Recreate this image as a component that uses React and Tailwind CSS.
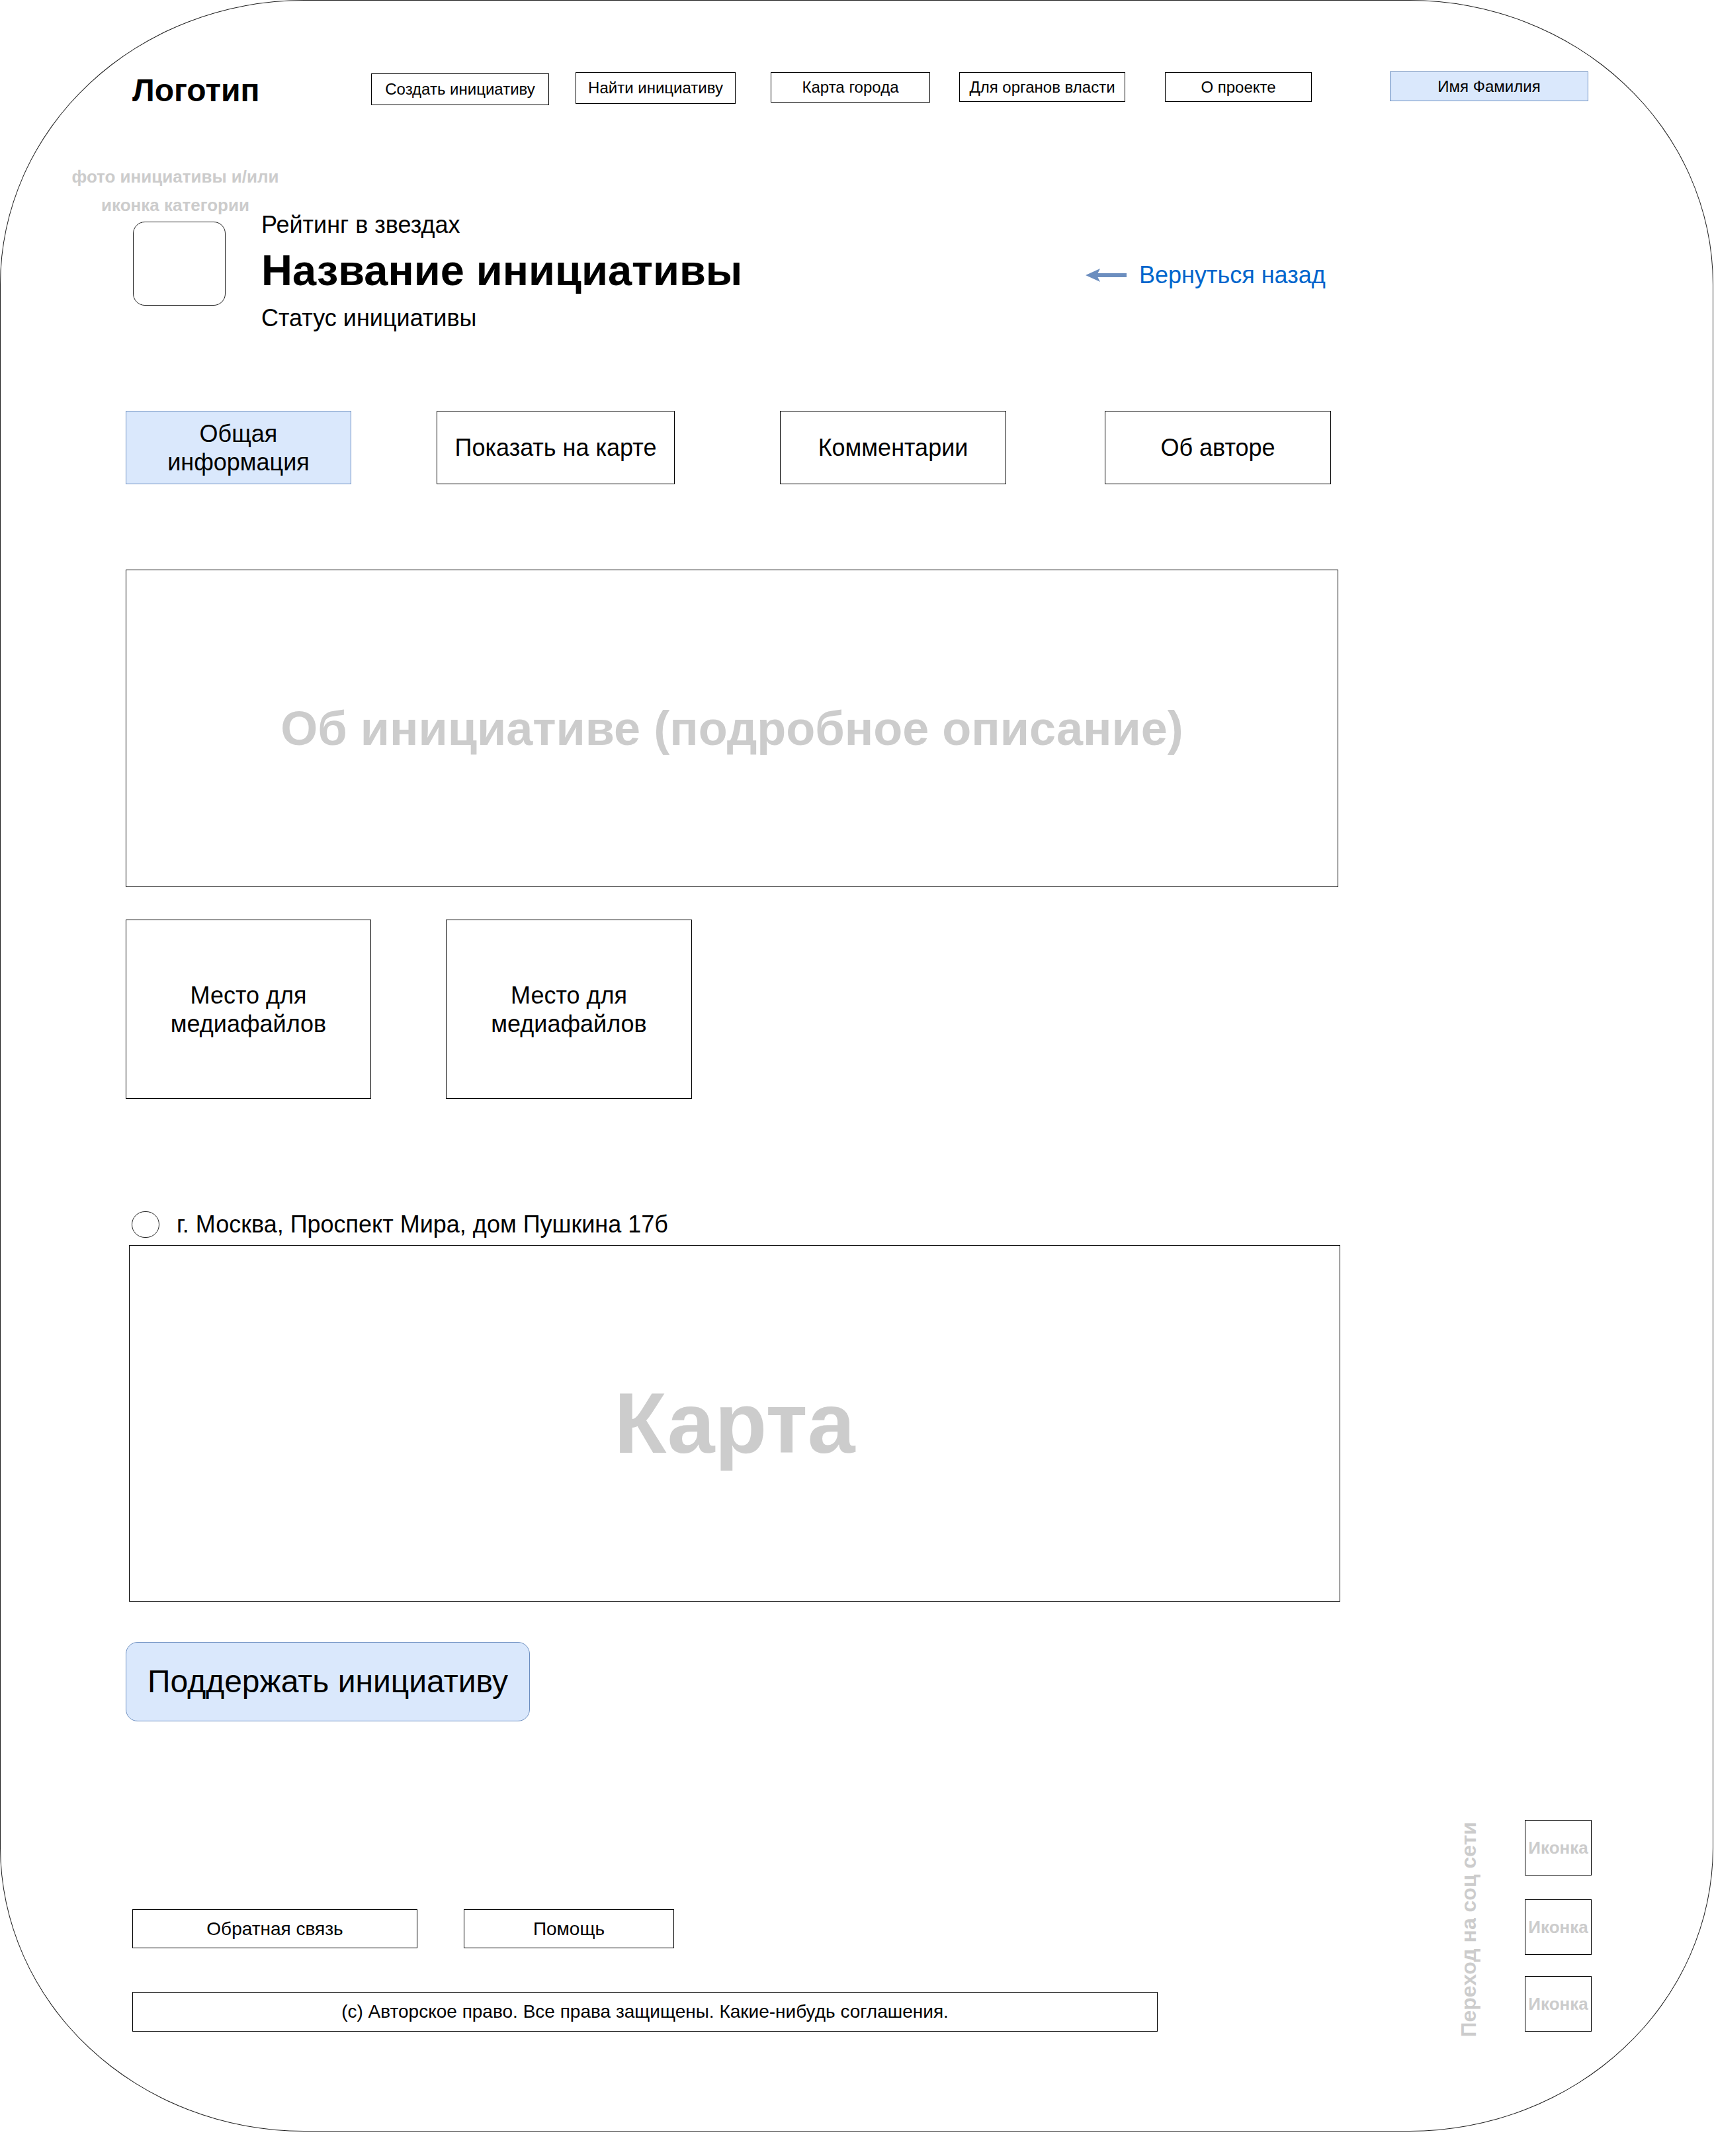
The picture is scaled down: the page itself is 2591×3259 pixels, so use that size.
const NAV = [
  { label: 'Создать инициативу', cls: 'mt-[3px] w-[269px] h-[48px]' },
  { label: 'Найти инициативу', cls: 'ml-[40px] mt-[1px] w-[242px] h-[48px]' },
  { label: 'Карта города', cls: 'ml-[53px] mt-[1px] w-[241px] h-[46px]' },
  { label: 'Для органов власти', cls: 'ml-[44px] mt-[1px] w-[251px] h-[45px]' },
  { label: 'О проекте', cls: 'ml-[60px] mt-[1px] w-[222px] h-[45px]' },
]

const TABS = [
  { label: 'Общая информация', cls: 'w-[341px] bg-[#dae8fc] border-[#6c8ebf] px-[40px]' },
  { label: 'Показать на карте', cls: 'ml-[129px] w-[360px] border-black' },
  { label: 'Комментарии', cls: 'ml-[159px] w-[342px] border-black' },
  { label: 'Об авторе', cls: 'ml-[149px] w-[342px] border-black' },
]

function BackArrow() {
  return (
    <svg width="62" height="20" viewBox="0 0 62 20">
      <rect x="17" y="7" width="45" height="6" fill="#6c8ebf" />
      <polygon points="0,10 22,0 17,10 22,20" fill="#6c8ebf" />
    </svg>
  )
}

export default function App() {
  return (
    <div className="w-[2591px] h-[3259px] bg-white text-black font-['Liberation_Sans',Arial,sans-serif]">
      <div className="w-[2590px] h-[3222px] border border-[#222] rounded-[460px/430px] pl-[189px] pt-[107px]">
        {/* header */}
        <div className="flex items-start">
          <div className="ml-[10px] mt-[5px] w-[361px] text-[48px] font-bold leading-none">Логотип</div>
          {NAV.map(n => (
            <div key={n.label} className={`${n.cls} border border-black flex items-center justify-center text-[24px] leading-none`}>
              {n.label}
            </div>
          ))}
          <div className="ml-[118px] w-[300px] h-[45px] border border-[#6c8ebf] bg-[#dae8fc] flex items-center justify-center text-[24px] leading-none">
            Имя Фамилия
          </div>
        </div>

        {/* initiative title */}
        <div className="mt-[85px] flex items-start">
          <div className="w-[205px] shrink-0">
            <div className="-ml-[105px] w-[360px] text-center text-[26px] font-bold leading-[43px] text-[#cccccc]">
              фото инициативы и/или<br />иконка категории
            </div>
            <div className="mt-[3px] ml-[11px] w-[140px] h-[127px] rounded-[18px] border border-[#222]" />
          </div>
          <div className="mt-[76px] flex items-start">
            <div className="w-[1246px] flex flex-col">
              <div className="text-[36px] leading-none">Рейтинг в звездах</div>
              <div className="mt-[18px] text-[65px] font-bold leading-none">Название инициативы</div>
              <div className="mt-[22px] text-[36px] leading-none">Статус инициативы</div>
            </div>
            <div className="mt-[76px] flex items-center gap-[19px] whitespace-nowrap">
              <BackArrow />
              <span className="text-[36px] leading-none text-[#0066cc]">Вернуться назад</span>
            </div>
          </div>
        </div>

        {/* tabs */}
        <div className="mt-[122px] flex h-[111px]">
          {TABS.map(t => (
            <div key={t.label} className={`${t.cls} border flex items-center justify-center text-center text-[36px] leading-[43px]`}>
              {t.label}
            </div>
          ))}
        </div>

        {/* description */}
        <div className="mt-[129px] w-[1833px] h-[480px] border border-black flex items-center justify-center">
          <span className="text-[72px] font-bold leading-none text-[#cccccc]">Об инициативе (подробное описание)</span>
        </div>

        {/* media */}
        <div className="mt-[49px] flex h-[271px]">
          <div className="w-[371px] border border-black flex items-center justify-center text-center text-[36px] leading-[43px]">
            Место для<br />медиафайлов
          </div>
          <div className="ml-[113px] w-[372px] border border-black flex items-center justify-center text-center text-[36px] leading-[43px]">
            Место для<br />медиафайлов
          </div>
        </div>

        {/* address + map */}
        <div className="mt-[170px] flex items-center h-[40px]">
          <div className="ml-[9px] w-[42px] h-[40px] rounded-full border border-[#222]" />
          <span className="ml-[26px] text-[36px] leading-none">г. Москва, Проспект Мира, дом Пушкина 17б</span>
        </div>
        <div className="mt-[11px] ml-[5px] w-[1831px] h-[539px] border border-black flex items-center justify-center">
          <span className="text-[129px] font-bold leading-none text-[#cccccc]">Карта</span>
        </div>

        <button className="mt-[61px] w-[611px] h-[120px] rounded-[18px] border border-[#6c8ebf] bg-[#dae8fc] flex items-center justify-center text-[48px] leading-none">
          Поддержать инициативу
        </button>

        {/* footer */}
        <div className="mt-[149px] flex items-start">
          <div className="ml-[10px] w-[1550px] pt-[135px]">
            <div className="flex">
              <div className="w-[431px] h-[59px] border border-black flex items-center justify-center text-[28px] leading-none">Обратная связь</div>
              <div className="ml-[70px] w-[318px] h-[59px] border border-black flex items-center justify-center text-[28px] leading-none">Помощь</div>
            </div>
            <div className="mt-[66px] w-[1550px] h-[60px] border border-black flex items-center justify-center text-[28px] leading-none">
              (с) Авторское право. Все права защищены. Какие-нибудь соглашения.
            </div>
          </div>
          <div className="ml-[454px] mt-[3px] w-[32px] [writing-mode:vertical-rl] rotate-180 whitespace-nowrap text-[32px] font-bold leading-none text-[#cccccc]">
            Переход на соц сети
          </div>
          <div className="ml-[69px] flex flex-col">
            {['mt-0', 'mt-[36px]', 'mt-[32px]'].map((m, i) => (
              <div key={i} className={`${m} w-[101px] h-[84px] border border-black flex items-center justify-center text-[26px] font-bold leading-none text-[#cccccc]`}>
                Иконка
              </div>
            ))}
          </div>
        </div>
      </div>
    </div>
  )
}
